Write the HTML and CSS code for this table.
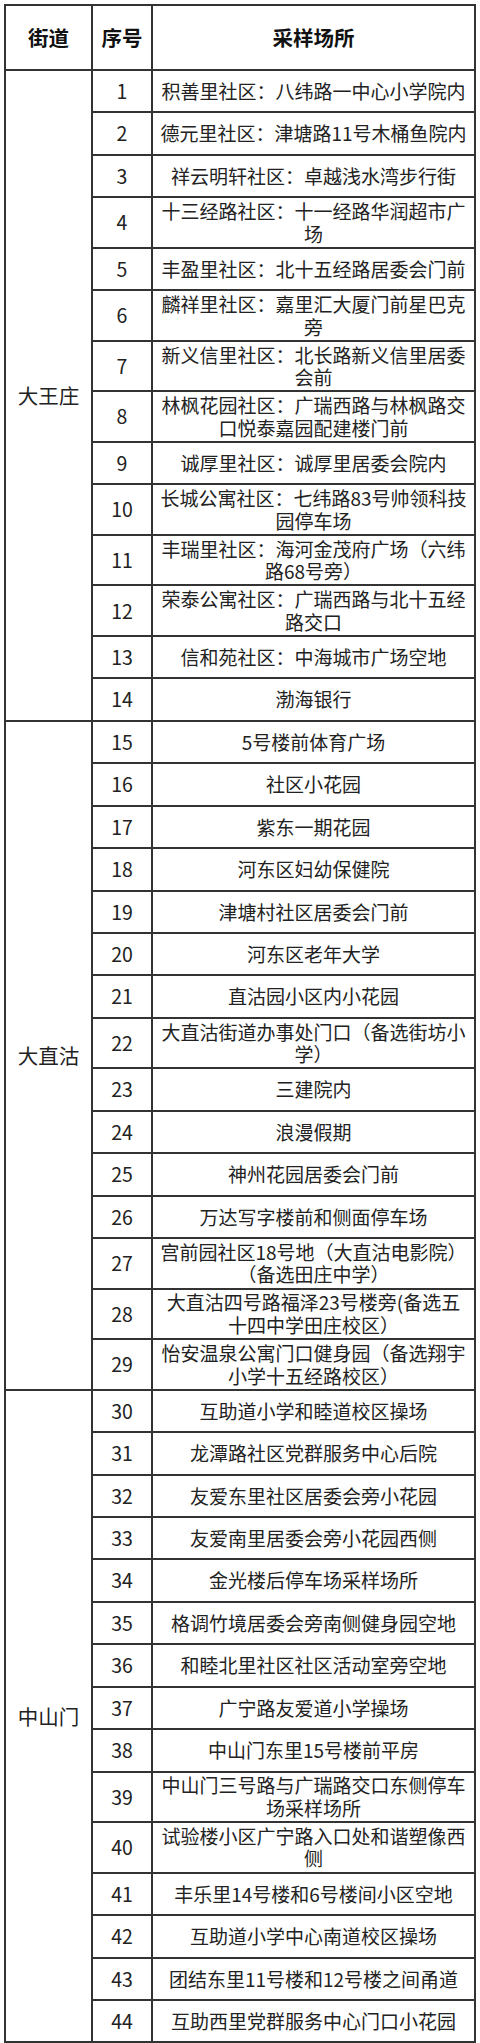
FILE: index.html
```html
<!DOCTYPE html>
<html lang="zh-CN">
<head>
<meta charset="utf-8">
<title>采样场所</title>
<link rel="stylesheet" href="styles.css">
</head>
<body>
<div class="sheet">
<table class="grid">
<colgroup><col class="c-street"><col class="c-no"><col class="c-place"></colgroup>
<thead>
<tr class="head"><th>街道</th><th>序号</th><th>采样场所</th></tr>
</thead>
<tbody>
<tr class="s"><td class="street" rowspan="14">大王庄</td><td class="no">1</td><td>积善里社区：八纬路一中心小学院内</td></tr>
<tr class="s"><td class="no">2</td><td>德元里社区：津塘路11号木桶鱼院内</td></tr>
<tr class="s"><td class="no">3</td><td>祥云明轩社区：卓越浅水湾步行街</td></tr>
<tr class="d"><td class="no">4</td><td>十三经路社区：十一经路华润超市广<br>场</td></tr>
<tr class="s"><td class="no">5</td><td>丰盈里社区：北十五经路居委会门前</td></tr>
<tr class="d"><td class="no">6</td><td>麟祥里社区：嘉里汇大厦门前星巴克<br>旁</td></tr>
<tr class="d"><td class="no">7</td><td>新义信里社区：北长路新义信里居委<br>会前</td></tr>
<tr class="d"><td class="no">8</td><td>林枫花园社区：广瑞西路与林枫路交<br>口悦泰嘉园配建楼门前</td></tr>
<tr class="s"><td class="no">9</td><td>诚厚里社区：诚厚里居委会院内</td></tr>
<tr class="d"><td class="no">10</td><td>长城公寓社区：七纬路83号帅领科技<br>园停车场</td></tr>
<tr class="d"><td class="no">11</td><td>丰瑞里社区：海河金茂府广场（六纬<br>路68号旁）</td></tr>
<tr class="d"><td class="no">12</td><td>荣泰公寓社区：广瑞西路与北十五经<br>路交口</td></tr>
<tr class="s"><td class="no">13</td><td>信和苑社区：中海城市广场空地</td></tr>
<tr class="s"><td class="no">14</td><td>渤海银行</td></tr>

<tr class="s"><td class="street" rowspan="15">大直沽</td><td class="no">15</td><td>5号楼前体育广场</td></tr>
<tr class="s"><td class="no">16</td><td>社区小花园</td></tr>
<tr class="s"><td class="no">17</td><td>紫东一期花园</td></tr>
<tr class="s"><td class="no">18</td><td>河东区妇幼保健院</td></tr>
<tr class="s"><td class="no">19</td><td>津塘村社区居委会门前</td></tr>
<tr class="s"><td class="no">20</td><td>河东区老年大学</td></tr>
<tr class="s"><td class="no">21</td><td>直沽园小区内小花园</td></tr>
<tr class="d"><td class="no">22</td><td>大直沽街道办事处门口（备选街坊小<br>学）</td></tr>
<tr class="s"><td class="no">23</td><td>三建院内</td></tr>
<tr class="s"><td class="no">24</td><td>浪漫假期</td></tr>
<tr class="s"><td class="no">25</td><td>神州花园居委会门前</td></tr>
<tr class="s"><td class="no">26</td><td>万达写字楼前和侧面停车场</td></tr>
<tr class="d"><td class="no">27</td><td>宫前园社区18号地（大直沽电影院）<br>（备选田庄中学）</td></tr>
<tr class="d"><td class="no">28</td><td>大直沽四号路福泽23号楼旁(备选五<br>十四中学田庄校区）</td></tr>
<tr class="d"><td class="no">29</td><td>怡安温泉公寓门口健身园（备选翔宇<br>小学十五经路校区）</td></tr>

<tr class="s"><td class="street" rowspan="15">中山门</td><td class="no">30</td><td>互助道小学和睦道校区操场</td></tr>
<tr class="s"><td class="no">31</td><td>龙潭路社区党群服务中心后院</td></tr>
<tr class="s"><td class="no">32</td><td>友爱东里社区居委会旁小花园</td></tr>
<tr class="s"><td class="no">33</td><td>友爱南里居委会旁小花园西侧</td></tr>
<tr class="s"><td class="no">34</td><td>金光楼后停车场采样场所</td></tr>
<tr class="s"><td class="no">35</td><td>格调竹境居委会旁南侧健身园空地</td></tr>
<tr class="s"><td class="no">36</td><td>和睦北里社区社区活动室旁空地</td></tr>
<tr class="s"><td class="no">37</td><td>广宁路友爱道小学操场</td></tr>
<tr class="s"><td class="no">38</td><td>中山门东里15号楼前平房</td></tr>
<tr class="d"><td class="no">39</td><td>中山门三号路与广瑞路交口东侧停车<br>场采样场所</td></tr>
<tr class="d"><td class="no">40</td><td>试验楼小区广宁路入口处和谐塑像西<br>侧</td></tr>
<tr class="s"><td class="no">41</td><td>丰乐里14号楼和6号楼间小区空地</td></tr>
<tr class="s"><td class="no">42</td><td>互助道小学中心南道校区操场</td></tr>
<tr class="s"><td class="no">43</td><td>团结东里11号楼和12号楼之间甬道</td></tr>
<tr class="s"><td class="no">44</td><td>互助西里党群服务中心门口小花园</td></tr>
</tbody>
</table>
</div>
</body>
</html>
```
FILE: styles.css
```css
html, body {
  margin: 0;
  padding: 0;
  background: #ffffff;
}

body {
  font-family: "Noto Sans CJK SC", "Noto Sans", sans-serif;
  color: #222222;
}

.sheet {
  padding: 4px 0 0 4px;
}

.grid {
  border-collapse: collapse;
  table-layout: fixed;
  width: 470px;
}

.c-street { width: 87px; }
.c-no { width: 60px; }
.c-place { width: 323px; }

.grid th,
.grid td {
  border: 2px solid #333333;
  text-align: center;
  vertical-align: middle;
  padding: 0 2px;
  font-size: 19px;
  line-height: 22.5px;
  font-weight: 400;
}

.grid th {
  font-size: 20.5px;
  font-weight: 700;
  color: #111111;
}

.grid td.street {
  font-size: 20.5px;
}

.grid td.no {
  font-size: 19.5px;
}

.head { height: 65px; }
.s { height: 42.43px; }
.d { height: 50.57px; }
```
